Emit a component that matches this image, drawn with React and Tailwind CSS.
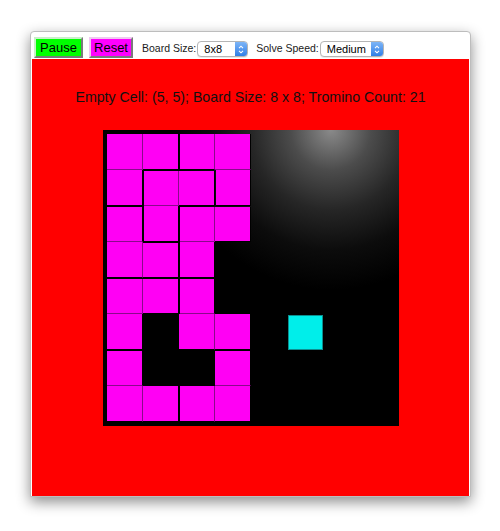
import React from "react"

// tromino ids per cell, "." = not placed yet, "*" = the missing cell
const BOARD = [
  "AABB....",
  "ACCB....",
  "DCEE....",
  "DDE.....",
  "FFG.....",
  "F.GG.*..",
  "H..I....",
  "HHII....",
]

const cellAt = (r, c) => (r < 0 || c < 0 || r > 7 || c > 7 ? null : BOARD[r][c])

// true when the neighbour belongs to another placed tromino
const otherPiece = (n, id) => n && n !== id && n !== "." && n !== "*"

function Cell({ r, c }) {
  const id = BOARD[r][c]
  if (id === ".") return <div className="w-[36px] h-[36px]" />
  if (id === "*")
    return (
      <div className="w-[36px] h-[36px] pl-[1px] pt-[1px]">
        <div className="w-[35px] h-[35px] bg-[#00eeea] border border-[#0b8f8f]" />
      </div>
    )
  const left = cellAt(r, c - 1)
  const top = cellAt(r - 1, c)
  const right = cellAt(r, c + 1)
  const bottom = cellAt(r + 1, c)
  return (
    <div className={"w-[36px] h-[36px] flex " + (otherPiece(top, id) ? "pt-[1px]" : "")}>
      <div
        className={
          "flex-1 bg-[#ff00f4] border-r border-b " +
          (right === id ? "border-r-[#8a0a8a] " : "border-r-black ") +
          (bottom === id ? "border-b-[#8a0a8a] " : "border-b-black ") +
          (otherPiece(left, id) ? "ml-[1px]" : "")
        }
      />
    </div>
  )
}

function Stepper() {
  return (
    <div className="w-[12px] self-stretch rounded-r-[3px] bg-gradient-to-b from-[#7db5f7] to-[#2f7fe6] flex items-center justify-center">
      <svg width="6" height="9" viewBox="0 0 6 9" fill="none" stroke="white" strokeWidth="1.1">
        <path d="M1 3.2 L3 1.2 L5 3.2" />
        <path d="M1 5.8 L3 7.8 L5 5.8" />
      </svg>
    </div>
  )
}

function Select({ value, width }) {
  return (
    <div className={"mt-[9px] h-[16px] shrink-0 flex items-center bg-white border border-[#b5b5b5] rounded-[4px] shadow-[0_1px_0_rgba(0,0,0,0.08)] " + width}>
      <span className="flex-1 pl-[6px] text-[11px] leading-none text-black">{value}</span>
      <Stepper />
    </div>
  )
}

export default function App() {
  return (
    <div className="w-[500px] h-[531px] bg-white pt-[31px] pl-[30px]" style={{ fontFamily: '"Liberation Sans", Arial, sans-serif' }}>
      <div className="w-[441px] h-[466px] bg-white border border-[#bdbdbd] rounded-t-[4px] shadow-[0_5px_14px_rgba(0,0,0,0.45)] flex flex-col px-[1px]">
        <div className="h-[27px] flex items-start pl-[2px] shrink-0">
          <button className="mt-[5px] w-[49px] h-[21px] bg-[#00ff00] border-2 border-t-[#c8f0c8] border-l-[#c8f0c8] border-r-[#7a7a7a] border-b-[#7a7a7a] text-[13px] text-black leading-none">
            Pause
          </button>
          <button className="mt-[5px] ml-[6px] w-[44px] h-[21px] bg-[#ff00ff] border-2 border-t-[#f0c8f0] border-l-[#f0c8f0] border-r-[#7a7a7a] border-b-[#7a7a7a] text-[13px] text-black leading-none">
            Reset
          </button>
          <span className="mt-[10px] ml-[9px] mr-[1px] shrink-0 whitespace-nowrap text-[10.5px] leading-[12px] text-[#1a1a1a]">Board Size:</span>
          <Select value="8x8" width="w-[51px]" />
          <span className="mt-[10px] ml-[8px] mr-[1px] shrink-0 whitespace-nowrap text-[10.5px] leading-[12px] text-[#1a1a1a]">Solve Speed:</span>
          <Select value="Medium" width="w-[64px]" />
        </div>
        <div className="flex-1 bg-[#ff0000] flex flex-col items-center pt-[28px]">
          <p className="text-[14.2px] leading-[20px] text-[#111]">
            Empty Cell: (5, 5); Board Size: 8 x 8; Tromino Count: 21
          </p>
          <div className="mt-[23px] w-[296px] h-[296px] p-[4px] bg-[radial-gradient(circle_at_228px_0px,#8a8a8a_0px,#4c4c4c_40px,#262626_80px,#0c0c0c_120px,#000_160px)]">
            <div className="grid grid-cols-8">
              {BOARD.map((row, r) =>
                row.split("").map((_, c) => <Cell key={r + "-" + c} r={r} c={c} />)
              )}
            </div>
          </div>
        </div>
      </div>
    </div>
  )
}
